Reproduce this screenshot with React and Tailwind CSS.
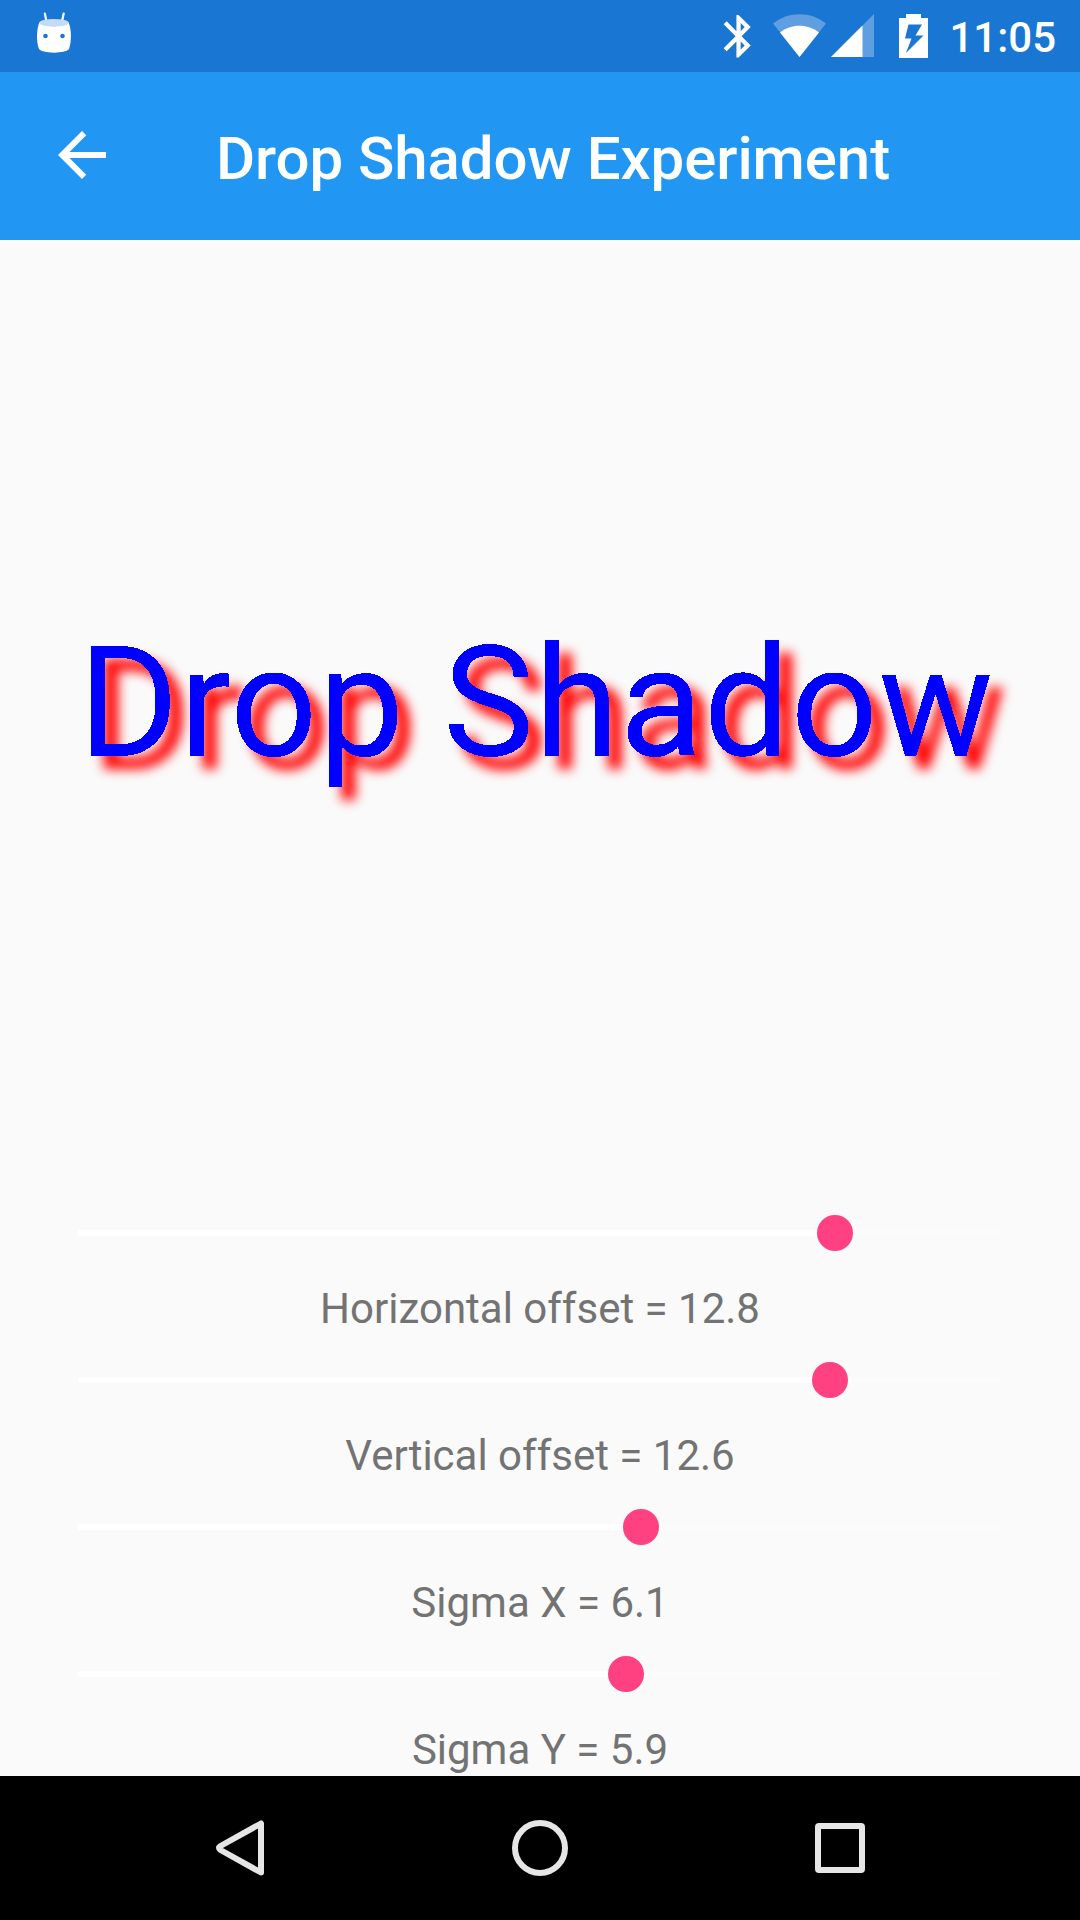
const sliders = [
  { label: 'Horizontal offset = 12.8', x: 835 },
  { label: 'Vertical offset = 12.6', x: 830 },
  { label: 'Sigma X = 6.1', x: 641 },
  { label: 'Sigma Y = 5.9', x: 626 },
];

function StatusBar() {
  return (
    <div className="flex h-[72px] shrink-0 items-start justify-between bg-[#1976d2] text-white">
      <svg width="72" height="72" viewBox="0 0 72 72" className="ml-[18px]" fill="#fff">
        <path d="M26.8 13.5L28.4 21M45.7 13.5L44.1 21" stroke="#fff" strokeWidth="2.2" strokeLinecap="round" />
        <path d="M21.5 22C22 27.5 50 27.5 50.5 22C53.8 30 53.5 42 51.2 48.5C49.5 54 22.5 54 20.8 48.5C18.5 42 18.2 30 21.5 22Z" />
        <ellipse cx="36" cy="22.8" rx="14.7" ry="3.9" fill="#c5dbf4" />
        <circle cx="27.5" cy="36" r="2.3" fill="#1976d2" />
        <circle cx="44.5" cy="36" r="2.3" fill="#1976d2" />
      </svg>
      <div className="flex">
        <svg width="240" height="72" viewBox="700 0 240 72" fill="#fff">
          <path
            transform="translate(713 10.7) scale(2.13)"
            d="M17.71 7.71L12 2h-1v7.59L6.41 5 5 6.41 10.59 12 5 17.59 6.41 19 11 14.41V22h1l5.71-5.71-4.3-4.29 4.3-4.29zM13 5.83l1.88 1.88L13 9.59V5.83zm1.88 10.46L13 18.17v-3.76l1.88 1.88z"
          />
          <path d="M773 23.5C788 11 811 11 826 23.5L799.5 57Z" fill="#5f9fe0" />
          <path d="M780 32.6C791 23.5 808 23.5 819 32.6L799.5 57Z" />
          <path d="M831 57L874 14V57Z" fill="#5f9fe0" />
          <path d="M831 57L862.5 25.5V57Z" />
          <path d="M906 14H921V18H928V58H899V18H906Z" />
          <path d="M908.5 24.5H922L915.5 35.5H923.5L906 53L911.5 38.5H905Z" fill="#1976d2" />
        </svg>
        <span className="mr-[24px] w-[116px] whitespace-nowrap pl-[9.5px] pt-[13px] text-[42px] font-medium leading-[49px]">11:05</span>
      </div>
    </div>
  );
}

function AppBar() {
  return (
    <header className="flex h-[168px] shrink-0 items-start bg-[#2196f3] text-white">
      <svg width="72" height="72" viewBox="0 0 24 24" className="ml-[46px] mt-[47px]" fill="#fff">
        <path d="M20 11H7.83l5.59-5.59L12 4l-8 8 8 8 1.41-1.41L7.83 13H20v-2z" />
      </svg>
      <h1 className="ml-[98px] mt-[52px] whitespace-nowrap text-[60px] font-medium leading-[70px] tracking-[-0.08px]">Drop Shadow Experiment</h1>
    </header>
  );
}

function SliderRow({ label, x }) {
  return (
    <div className="h-[147px] shrink-0">
      <div className="flex h-[94px] items-center px-[78px]">
        <div className="h-[6px] bg-white" style={{ width: x - 96 }} />
        <div className="size-[36px] shrink-0 rounded-full bg-[#ff4081]" />
        <div className="h-[6px] grow bg-[#fbfbfb]" />
      </div>
      <div className="h-[53px] pt-[4px] text-center text-[42px] leading-[49px] text-[#737373]">{label}</div>
    </div>
  );
}

function NavBar() {
  return (
    <nav className="flex h-[144px] shrink-0 items-center justify-center gap-[216px] bg-black">
      <svg width="84" height="84" viewBox="198 1806 84 84" fill="none" stroke="#e6e6e6" strokeWidth="6" strokeLinejoin="round">
        <path d="M261 1823.5V1872.5L220.5 1850Q217.5 1848 220.5 1846Z" />
      </svg>
      <svg width="84" height="84" viewBox="0 0 84 84" fill="none" stroke="#e6e6e6" strokeWidth="6">
        <circle cx="42" cy="42" r="25" />
      </svg>
      <svg width="84" height="84" viewBox="0 0 84 84" fill="none" stroke="#e6e6e6" strokeWidth="6">
        <rect x="20" y="20" width="44" height="44" rx="1" />
      </svg>
    </nav>
  );
}

export default function App() {
  return (
    <div className="flex h-[1920px] w-[1080px] flex-col overflow-hidden bg-[#fafafa] font-['Roboto',sans-serif]">
      <StatusBar />
      <AppBar />
      <main className="flex h-[1536px] shrink-0 flex-col overflow-hidden">
        {/* Hard-edged text over a blurred red shadow, driven by the slider values */}
        <svg width="0" height="0" className="absolute">
          <filter id="drop-shadow" x="-10%" y="-20%" width="120%" height="150%" colorInterpolationFilters="sRGB">
            <feGaussianBlur in="SourceAlpha" stdDeviation="6.1 5.9" result="blur" />
            <feOffset in="blur" dx="12.8" dy="12.6" result="offset" />
            <feFlood floodColor="#ff0000" />
            <feComposite in2="offset" operator="in" result="shadow" />
            <feComponentTransfer in="SourceGraphic" result="crisp">
              <feFuncA type="discrete" tableValues="0 1" />
            </feComponentTransfer>
            <feMerge>
              <feMergeNode in="shadow" />
              <feMergeNode in="crisp" />
            </feMerge>
          </filter>
        </svg>
        <div className="flex h-[946px] shrink-0 items-start pl-[78px] pt-[374px]">
          <div className="whitespace-nowrap text-[153.5px] leading-[180px] tracking-[0.4px] text-[#0000ff] [filter:url(#drop-shadow)]">Drop Shadow</div>
        </div>
        {sliders.map((s) => (
          <SliderRow key={s.label} {...s} />
        ))}
      </main>
      <NavBar />
    </div>
  );
}
